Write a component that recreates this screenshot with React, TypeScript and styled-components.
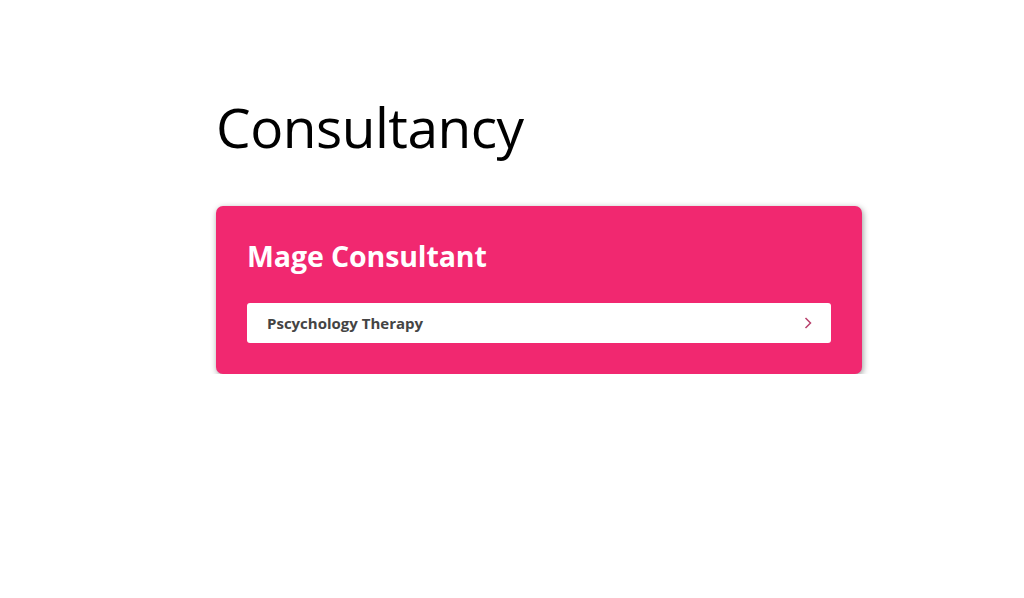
import React from "react";
import styled, { createGlobalStyle } from "styled-components";

const GlobalStyle = createGlobalStyle`
  * { box-sizing: border-box; }
  body {
    margin: 0;
    background: #ffffff;
    font-family: "Open Sans", "Noto Sans", sans-serif;
  }
`;

const Page = styled.main`
  padding: 88px 0 0 216px;
`;

const Title = styled.h1`
  margin: 0 0 40px;
  font-size: 55px;
  font-weight: 400;
  line-height: 78px;
  color: #000;
  letter-spacing: -0.5px;
`;

const Card = styled.section`
  width: 646px;
  padding: 30px 31px 31px;
  background: #f12870;
  border-radius: 7px;
  box-shadow: 1px 2px 6px rgba(0, 0, 0, 0.4);
`;

const CardTitle = styled.h2`
  margin: 0 0 27px;
  font-size: 28.5px;
  font-weight: 700;
  line-height: 40px;
  color: #ffffff;
  letter-spacing: -0.1px;
`;

const ItemRow = styled.a`
  display: flex;
  align-items: center;
  justify-content: space-between;
  height: 40px;
  padding: 0 18px 0 20px;
  background: #ffffff;
  border-radius: 3px;
  text-decoration: none;
  cursor: pointer;
`;

const ItemLabel = styled.span`
  font-size: 15px;
  font-weight: 700;
  color: #444444;
`;

const Chevron = () => (
  <svg width="10" height="14" viewBox="0 0 10 14" fill="none">
    <path d="M2.5 2 L7.5 7 L2.5 12" stroke="#b8406c" strokeWidth="1.5" />
  </svg>
);

export default function App() {
  return (
    <>
      <GlobalStyle />
      <Page>
        <Title>Consultancy</Title>
        <Card>
          <CardTitle>Mage Consultant</CardTitle>
          <ItemRow>
            <ItemLabel>Pscychology Therapy</ItemLabel>
            <Chevron />
          </ItemRow>
        </Card>
      </Page>
    </>
  );
}
